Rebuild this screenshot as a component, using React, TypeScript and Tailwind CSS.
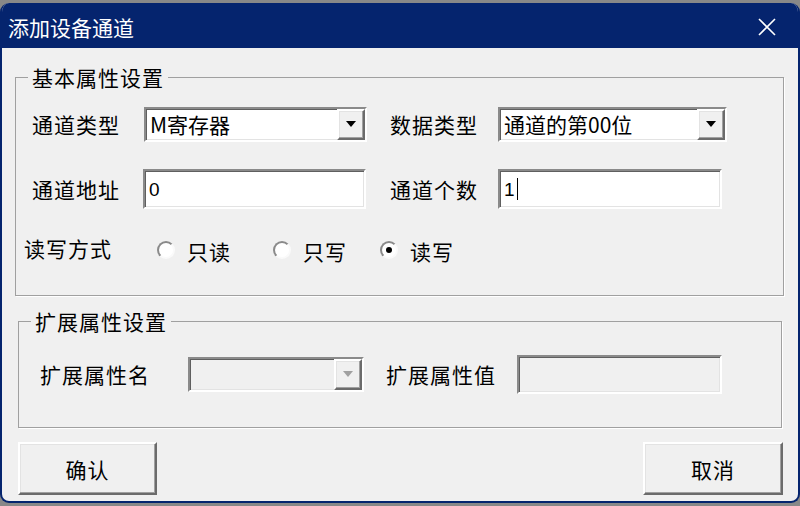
import React from "react";

const sunken =
  "border-2 border-t-[#8a8a8a] border-l-[#8a8a8a] border-b-[#ffffff] border-r-[#ffffff] shadow-[inset_1px_1px_0_#5f5f5f,inset_-1px_-1px_0_#e3e3e3]";
const raised =
  "border-2 border-t-[#ffffff] border-l-[#ffffff] border-b-[#6b6b6b] border-r-[#6b6b6b] shadow-[inset_-1px_-1px_0_#a0a0a0,inset_1px_1px_0_#e3e3e3]";

const Arrow = ({ disabled }: { disabled?: boolean }) => (
  <svg width="10" height="6" viewBox="0 0 10 6">
    <path d="M0 0h10L5 6z" fill={disabled ? "#a0a0a0" : "#000"} />
  </svg>
);

// 下拉框
const Combo = ({
  value,
  width,
  disabled,
}: {
  value?: string;
  width: string;
  disabled?: boolean;
}) => (
  <div
    className={`flex h-[35px] ${width} ${sunken} ${
      disabled ? "bg-[#f0f0f0]" : "bg-white"
    }`}
  >
    <div className="flex-1 pl-[4px] leading-[31px] tracking-normal text-black">{value}</div>
    <div
      className={`flex w-[28px] items-center justify-center bg-[#f0f0f0] ${raised}`}
    >
      <Arrow disabled={disabled} />
    </div>
  </div>
);

// 文本框
const Field = ({
  value,
  width,
  height,
  caret,
  disabled,
}: {
  value?: string;
  width: string;
  height: string;
  caret?: boolean;
  disabled?: boolean;
}) => (
  <div
    className={`flex items-center ${height} ${width} ${sunken} ${
      disabled ? "bg-[#f0f0f0]" : "bg-white"
    } pl-[4px]`}
  >
    <span className="font-['Liberation_Sans',sans-serif] text-[19px] leading-none text-black">
      {value}
    </span>
    {caret && <span className="ml-[1px] h-[22px] w-[1px] bg-black" />}
  </div>
);

const Radio = ({ label, checked }: { label: string; checked?: boolean }) => (
  <div className="flex items-center gap-[12px]">
    <span className="mt-[4px] flex h-[18px] w-[18px] items-center justify-center rounded-full border-2 border-t-[#8a8a8a] border-l-[#8a8a8a] border-b-[#fafafa] border-r-[#fafafa] bg-white">
      {checked && <span className="h-[6px] w-[6px] rounded-full bg-black" />}
    </span>
    <span className="mt-[6px]">{label}</span>
  </div>
);

const App = () => {
  return (
    <div className="h-[506px] w-[800px] overflow-hidden bg-[#888888] pt-[3px] font-['Noto_Sans_CJK_SC',sans-serif] text-[21px] leading-[24px] text-black select-none">
      <div className="flex h-[500px] w-[800px] flex-col overflow-hidden rounded-[9px] border-x-2 border-b-2 border-[#05246e] bg-[#f0f0f0] tracking-[1px]">
        {/* 标题栏 */}
        <div className="flex h-[45px] shrink-0 items-center justify-between bg-[#05246e] pl-[6px] pr-[22px] pt-[2px] tracking-normal">
          <span className="text-white">添加设备通道</span>
          <svg width="18" height="18" viewBox="0 0 18 18">
            <path d="M1 1L17 17M17 1L1 17" stroke="#fff" strokeWidth="1.6" />
          </svg>
        </div>

        {/* 基本属性设置 */}
        <fieldset className="ml-[13px] mt-[17px] h-[231px] w-[769px] border border-[#a0a0a0] shadow-[1px_1px_0_#fff]">
          <legend className="ml-[12px] px-[4px]">基本属性设置</legend>

          <div className="mt-[17px] flex h-[36px] items-center pl-[16px]">
            <span className="w-[112px]">通道类型</span>
            <Combo value="M寄存器" width="w-[223px]" />
            <span className="ml-[23px] w-[108px]">数据类型</span>
            <Combo value="通道的第00位" width="w-[229px]" />
          </div>

          <div className="mt-[27px] flex h-[40px] items-center pl-[16px]">
            <span className="w-[111px]">通道地址</span>
            <Field value="0" width="w-[223px]" height="h-[40px]" />
            <span className="ml-[24px] w-[108px]">通道个数</span>
            <Field value="1" caret width="w-[224px]" height="h-[40px]" />
          </div>

          <div className="mt-[24px] flex h-[30px] items-center pl-[8px]">
            <span className="w-[133px]">读写方式</span>
            <Radio label="只读" />
            <div className="ml-[42px]">
              <Radio label="只写" />
            </div>
            <div className="ml-[33px]">
              <Radio label="读写" checked />
            </div>
          </div>
        </fieldset>

        {/* 扩展属性设置 */}
        <fieldset className="ml-[16px] mt-[13px] h-[119px] w-[764px] border border-[#a0a0a0] shadow-[1px_1px_0_#fff]">
          <legend className="ml-[12px] px-[4px]">扩展属性设置</legend>

          <div className="mt-[21px] flex h-[40px] items-center pl-[21px]">
            <span className="w-[148px]">扩展属性名</span>
            <Combo width="w-[176px]" disabled />
            <span className="ml-[22px] w-[131px]">扩展属性值</span>
            <Field width="w-[205px]" height="h-[39px]" disabled />
          </div>
        </fieldset>

        {/* 按钮 */}
        <div className="mt-[14px] flex justify-between pl-[16px] pr-[15px]">
          <button
            type="button"
            className={`h-[53px] w-[139px] bg-[#f0f0f0] tracking-[1px] ${raised}`}
          >
            确认
          </button>
          <button
            type="button"
            className={`h-[53px] w-[140px] bg-[#f0f0f0] tracking-[1px] ${raised}`}
          >
            取消
          </button>
        </div>
      </div>
    </div>
  );
};

export default App;
